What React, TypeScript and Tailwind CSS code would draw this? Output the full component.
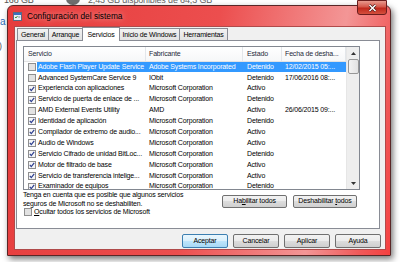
import React from 'react';

type Row = { name: string; maker: string; state: string; date: string; on: boolean };

const rows: Row[] = [
  { name: 'Adobe Flash Player Update Service', maker: 'Adobe Systems Incorporated', state: 'Detenido', date: '12/02/2015 05:...', on: false },
  { name: 'Advanced SystemCare Service 9', maker: 'IObit', state: 'Detenido', date: '17/06/2016 08:...', on: false },
  { name: 'Experiencia con aplicaciones', maker: 'Microsoft Corporation', state: 'Activo', date: '', on: true },
  { name: 'Servicio de puerta de enlace de ...', maker: 'Microsoft Corporation', state: 'Detenido', date: '', on: true },
  { name: 'AMD External Events Utility', maker: 'AMD', state: 'Activo', date: '26/06/2015 09:...', on: false },
  { name: 'Identidad de aplicación', maker: 'Microsoft Corporation', state: 'Detenido', date: '', on: true },
  { name: 'Compilador de extremo de audio...', maker: 'Microsoft Corporation', state: 'Activo', date: '', on: true },
  { name: 'Audio de Windows', maker: 'Microsoft Corporation', state: 'Activo', date: '', on: true },
  { name: 'Servicio Cifrado de unidad BitLoc...', maker: 'Microsoft Corporation', state: 'Detenido', date: '', on: true },
  { name: 'Motor de filtrado de base', maker: 'Microsoft Corporation', state: 'Activo', date: '', on: true },
  { name: 'Servicio de transferencia intelige...', maker: 'Microsoft Corporation', state: 'Activo', date: '', on: true },
  { name: 'Examinador de equipos', maker: 'Microsoft Corporation', state: 'Detenido', date: '', on: true },
];

const Check = ({ on }: { on: boolean }) => (
  <svg width="8" height="8" viewBox="0 0 8 8" className="shrink-0">
    <rect x="0.5" y="0.5" width="7" height="7" fill={on ? '#f6f6f6' : '#e2e2e2'} stroke="#8f8f8f" />
    {on && <path d="M1.8 3.8 L3.3 5.6 L6.2 1.9" fill="none" stroke="#2b3d8f" strokeWidth="1.2" />}
  </svg>
);

const Button = ({ children, w, primary }: { children: React.ReactNode; w: string; primary?: boolean }) => (
  <div
    className={`flex h-[14px] ${w} items-center justify-center rounded-[2px] border ${
      primary
        ? 'border-[#3c7fb1] bg-[linear-gradient(#eaf6fd,#d9f0fc_50%,#bee6fd_50%,#a7d9f5)]'
        : 'border-[#707070] bg-[linear-gradient(#f2f2f2,#ebebeb_50%,#dddddd_50%,#cfcfcf)]'
    }`}
  >
    {children}
  </div>
);

const tabs = [
  { label: 'General', w: 'w-[32px]' },
  { label: 'Arranque', w: 'w-[34px]' },
  { label: 'Servicios', w: 'w-[38px]', active: true },
  { label: 'Inicio de Windows', w: 'w-[60px]' },
  { label: 'Herramientas', w: 'w-[48px]' },
];

export default function App() {
  return (
    <div className="relative h-[262px] w-[400px] overflow-hidden bg-white font-['Liberation_Sans',Arial,sans-serif] text-[7px] tracking-[-0.15px] text-black">
      {/* desktop behind the dialog */}
      <span className="absolute left-[4px] top-[-6px] text-[9px] text-[#555]">168 GB</span>
      <span className="absolute left-[66px] top-[-8px] h-[13px] w-[14px] rounded-full bg-[#6f6f6f]" />
      <span className="absolute left-[88px] top-[-6px] text-[9px] text-[#666]">2,43 GB disponibles de 64,3 GB</span>
      <span className="absolute left-0 top-[14px] text-[10px] text-[#2a6bb8]">a</span>
      <span className="absolute left-[-1px] top-[40px] text-[9px] text-[#555]">)</span>

      <div className="absolute left-[7px] top-[5px] flex h-[251px] w-[384px] flex-col rounded-t-[6px] border border-[#5a2626] bg-[linear-gradient(100deg,#e63c3c_0%,#ec4e4e_50%,#f39696_80%,#f05858_93%,#f54040_100%)] shadow-[2px_3px_6px_rgba(0,0,0,0.55)]">
        {/* title bar */}
        <div className="flex h-[20px] items-center pl-[5px]">
          <svg width="9" height="9" viewBox="0 0 9 9" className="shrink-0">
            <rect x="0.5" y="0.5" width="8" height="8" fill="#e8eef6" stroke="#5a6a82" />
            <rect x="1" y="1" width="7" height="2" fill="#3a6fc0" />
            <path d="M2 5 L3 6 L4.5 4" fill="none" stroke="#2f8a2f" strokeWidth="0.9" />
            <rect x="5.2" y="4.6" width="2" height="0.8" fill="#5a6a82" />
          </svg>
          <span className="ml-[5px] text-[8.3px] tracking-[0px] [text-shadow:0_0_6px_rgba(255,255,255,0.7)]">
            Configuración del sistema
          </span>
          <div className="ml-auto mr-[3px] -mt-[6px] flex h-[15px] w-[30px] items-center justify-center self-start rounded-b-[3px] border border-[#6b1d1d] bg-[linear-gradient(#e89a8e,#d5574a_45%,#c0281c_55%,#d4503e)]">
            <svg width="9" height="8" viewBox="0 0 9 8">
              <path d="M1.5 1 L7.5 7 M7.5 1 L1.5 7" stroke="#3b1010" strokeWidth="2.6" />
              <path d="M1.5 1 L7.5 7 M7.5 1 L1.5 7" stroke="#ffffff" strokeWidth="1.5" />
            </svg>
          </div>
        </div>

        {/* client area */}
        <div className="mb-[5px] ml-[6px] mr-[4px] flex flex-1 flex-col border border-[#b04a4a] bg-[#f0f0f0]">
          <div className="flex h-[13px] items-end pl-[2px]">
            {tabs.map((t, i) =>
              t.active ? (
                <div
                  key={t.label}
                  className={`relative z-10 -mb-px -ml-px flex h-[14px] ${t.w} items-start justify-center border border-b-0 border-[#898c95] bg-white pt-[2px]`}
                >
                  {t.label}
                </div>
              ) : (
                <div
                  key={t.label}
                  className={`flex h-[12px] ${t.w} items-start justify-center border-t border-r ${
                    i === 0 ? 'border-l' : ''
                  } border-[#898c95] bg-[linear-gradient(#f2f2f2,#e3e3e3)] pt-[1px]`}
                >
                  {t.label}
                </div>
              ),
            )}
          </div>

          {/* tab page */}
          <div className="ml-px flex h-[189px] w-[364px] flex-col border border-[#898c95] bg-white">
            <div className="ml-[6px] mt-[5px] flex h-[144px] w-[337px] border border-[#828790]">
              <div className="flex w-[322px] flex-col overflow-hidden">
                <div className="flex h-[14.5px] shrink-0 items-center border-b border-[#e2e2e2] bg-[linear-gradient(#ffffff,#f6f7f8)] text-[#1e2a3a]">
                  <div className="flex h-full w-[122px] items-center border-r border-[#e3e6ea] pl-[4px]">Servicio</div>
                  <div className="flex h-full w-[97px] items-center border-r border-[#e3e6ea] pl-[3px]">Fabricante</div>
                  <div className="flex h-full w-[39px] items-center border-r border-[#e3e6ea] pl-[4px]">Estado</div>
                  <div className="flex h-full w-[64px] items-center border-r border-[#e3e6ea] pl-[3px]">Fecha de desha...</div>
                </div>
                {rows.map((r, i) => {
                  const sel = i === 0;
                  const cell = sel ? 'bg-[#3399ff] text-white' : '';
                  return (
                    <div key={r.name} className="flex h-[10.9px] shrink-0 items-center whitespace-nowrap">
                      <div className="flex h-full w-[13px] items-center pl-[4px]">
                        <Check on={r.on} />
                      </div>
                      <div className={`flex h-full w-[109px] items-center pl-px ${cell}`}>{r.name}</div>
                      <div className={`flex h-full w-[97px] items-center pl-[3px] ${cell}`}>{r.maker}</div>
                      <div className={`flex h-full w-[39px] items-center pl-[4px] ${cell}`}>{r.state}</div>
                      <div className={`flex h-full w-[64px] items-center pl-[3px] ${cell}`}>{r.date}</div>
                    </div>
                  );
                })}
              </div>
              {/* scrollbar */}
              <div className="flex w-[13px] flex-col items-center border-l border-[#e6e6e6] bg-[#eeeeee]">
                <div className="flex h-[12px] w-full items-center justify-center">
                  <svg width="5" height="3" viewBox="0 0 5 3">
                    <path d="M0 3 L2.5 0 L5 3 Z" fill="#333" />
                  </svg>
                </div>
                <div className="h-[15px] w-[11px] rounded-[2px] border border-[#979797] bg-[linear-gradient(90deg,#f3f3f3,#e2e2e2)]" />
                <div className="flex-1" />
                <div className="flex h-[12px] w-full items-center justify-center">
                  <svg width="5" height="3" viewBox="0 0 5 3">
                    <path d="M0 0 L2.5 3 L5 0 Z" fill="#333" />
                  </svg>
                </div>
              </div>
            </div>

            <div className="ml-[6px] flex w-[337px] justify-between">
              <div className="mt-px leading-[8.5px]">
                <div>Tenga en cuenta que es posible que algunos servicios</div>
                <div>seguros de Microsoft no se deshabiliten.</div>
                <div className="flex items-center gap-[2px] pl-px">
                  <Check on={false} />
                  <span>
                    <u>O</u>cultar todos los servicios de Microsoft
                  </span>
                </div>
              </div>
              <div className="mr-[3px] mt-[5px] flex gap-[6px]">
                <div className="flex h-[13px] w-[65px] items-center justify-center rounded-[2px] border border-[#707070] bg-[linear-gradient(#f2f2f2,#ebebeb_50%,#dddddd_50%,#cfcfcf)]">
                  <span>
                    Ha<u>b</u>ilitar todos
                  </span>
                </div>
                <div className="flex h-[13px] w-[64px] items-center justify-center rounded-[2px] border border-[#707070] bg-[linear-gradient(#f2f2f2,#ebebeb_50%,#dddddd_50%,#cfcfcf)]">
                  <span>
                    Deshabilitar <u>t</u>odos
                  </span>
                </div>
              </div>
            </div>
          </div>

          {/* dialog buttons */}
          <div className="mt-[5px] flex justify-end gap-[5px] pr-[4px]">
            <Button w="w-[46px]" primary>
              Aceptar
            </Button>
            <Button w="w-[46px]">Cancelar</Button>
            <Button w="w-[46px]">Aplicar</Button>
            <Button w="w-[46px]">Ayuda</Button>
          </div>
        </div>
      </div>
    </div>
  );
}
